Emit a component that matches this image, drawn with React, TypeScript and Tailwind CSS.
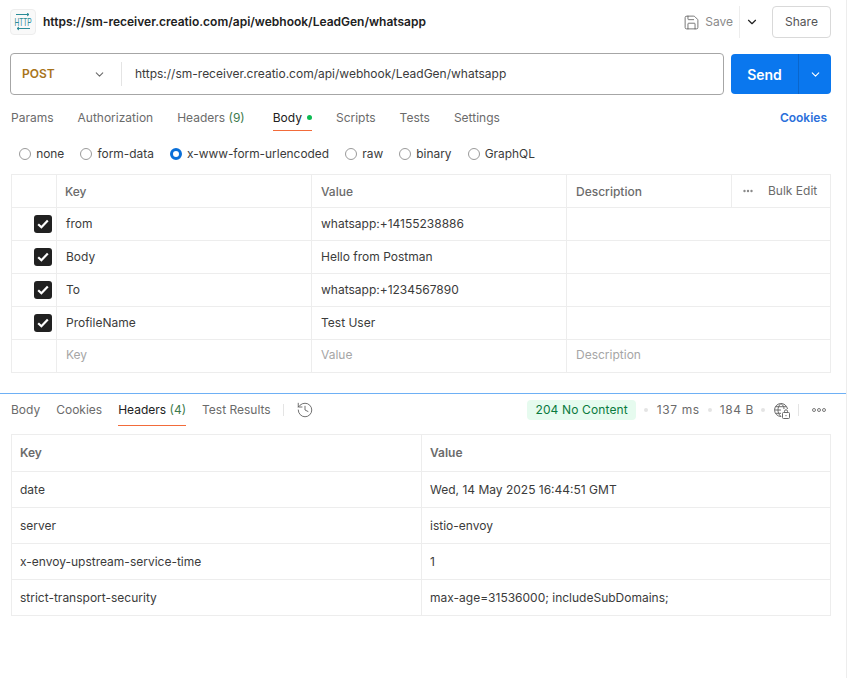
import { ChevronDown, History, Save } from 'lucide-react'

const font = { fontFamily: 'Inter, "Liberation Sans", sans-serif' }

const requestTabs = ['Params', 'Authorization']
const bodyTypes = ['none', 'form-data', 'x-www-form-urlencoded', 'raw', 'binary', 'GraphQL']
const params = [
  ['from', 'whatsapp:+14155238886'],
  ['Body', 'Hello from Postman'],
  ['To', 'whatsapp:+1234567890'],
  ['ProfileName', 'Test User'],
]
const responseHeaders = [
  ['date', 'Wed, 14 May 2025 16:44:51 GMT'],
  ['server', 'istio-envoy'],
  ['x-envoy-upstream-service-time', '1'],
  ['strict-transport-security', 'max-age=31536000; includeSubDomains;'],
]

/** 三个小圆点 */
function Dots() {
  return (
    <svg width="14" height="4" viewBox="0 0 14 4" fill="none" stroke="#6b6b6b" strokeWidth="0.9">
      <circle cx="2" cy="2" r="1.5" />
      <circle cx="7" cy="2" r="1.5" />
      <circle cx="12" cy="2" r="1.5" />
    </svg>
  )
}

function SmallDots() {
  return (
    <svg width="10" height="4" viewBox="0 0 10 4" fill="#8a8a8a">
      <circle cx="1.500" cy="2" r="1.200" />
      <circle cx="5" cy="2" r="1.200" />
      <circle cx="8.500" cy="2" r="1.200" />
    </svg>
  )
}

function HttpIcon() {
  return (
    <div className="flex h-[26px] w-[26px] items-center justify-center rounded-[4px] border border-[#ededed] bg-[#f9f9f9]">
      <svg width="18" height="18" viewBox="0 0 18 18" fill="none" stroke="#2a8c97" strokeWidth="1">
        <path d="M2 1.500h13M13 0l2 1.500-2 1.500" />
        <path d="M16 15.500H3M5 14l-2 1.500 2 1.500" />
        <text
          transform="translate(0.500 13) scale(0.6 1)"
          fontSize="11"
          fill="#2a8c97"
          stroke="none"
          fontFamily="Liberation Sans, sans-serif"
        >
          HTTP
        </text>
      </svg>
    </div>
  )
}

function GlobeLock() {
  return (
    <svg width="17" height="17" viewBox="0 0 17 17" fill="none" stroke="#6b6b6b" strokeWidth="1">
      <path d="M8 14.500A6.500 6.500 0 1 1 14.500 7" />
      <path d="M8 1.500C5.500 3.500 5 6 5 8s.5 4.500 3 6.500M8 1.500C10 3 11 5 11 7M1.500 8H8M2.500 4.700h11M2.500 11.300H8" />
      <rect x="9.500" y="10.500" width="7" height="6" rx="1" fill="#fff" />
      <path d="M11.500 10.500V9.300a1.500 1.500 0 0 1 3 0v1.200" />
      <path d="M13 13v1.200" />
    </svg>
  )
}

function Radio({ label, checked }: { label: string; checked?: boolean }) {
  return (
    <label className="flex items-center gap-[5.2px]">
      {checked ? (
        <span className="h-3 w-3 rounded-full border-[3.5px] border-[#0a6fd8] bg-white" />
      ) : (
        <span className="h-3 w-3 rounded-full border border-[#9a9a9a] bg-white" />
      )}
      <span className="text-[11.9px] leading-[16px] text-[#3b3b3b]">{label}</span>
    </label>
  )
}

function Checkbox() {
  return (
    <span className="flex h-[18px] w-[18px] items-center justify-center rounded-[3px] bg-[#212121]">
      <svg width="12" height="10" viewBox="0 0 12 10" fill="none" stroke="#fff" strokeWidth="2.200">
        <path d="M1.200 5.200 4.400 8.300 10.800 1.500" />
      </svg>
    </span>
  )
}

function Row({ k, v, last, muted }: { k: string; v: string; last?: boolean; muted?: boolean }) {
  const color = muted ? 'text-[#a6a6a6] pb-[2px]' : 'text-[#3b3b3b]'
  return (
    <div
      className={`grid grid-cols-[45px_255px_255px_1fr] text-[12px] ${
        last ? 'h-[32px]' : 'h-[33px] border-b border-[#ededed]'
      }`}
    >
      <div className="flex items-center justify-center border-r border-[#ededed] pl-[20px] pr-[3px]">
        {!muted && <Checkbox />}
      </div>
      <div className={`flex items-center border-r border-[#ededed] pl-[9px] ${color}`}>{k}</div>
      <div className={`flex items-center border-r border-[#ededed] pl-[9px] ${color}`}>{v}</div>
      <div className={`flex items-center pl-[9px] ${color}`}>{muted ? 'Description' : ''}</div>
    </div>
  )
}

export default function App() {
  return (
    <div className="h-[678px] w-[861px] overflow-hidden bg-white" style={font}>
      <div className="h-full w-[847px] border-r border-[#ededed]">
        {/* 顶部标题栏 */}
        <div className="flex h-[44px] items-center pl-[10px] pr-[15px]">
          <HttpIcon />
          <span className="ml-[7px] text-[12px] font-semibold text-[#212121]">
            https://sm-receiver.creatio.com/api/webhook/LeadGen/whatsapp
          </span>
          <div className="ml-auto flex items-center">
            <Save size={17} strokeWidth={1.1} className="text-[#545454]" />
            <span className="ml-[5px] text-[12px] text-[#8a8a8a]">Save</span>
            <span className="ml-[6px] h-8 w-px bg-[#ededed]" />
            <ChevronDown size={14} className="ml-[5px] text-[#212121]" />
            <button className="ml-[13px] h-8 w-[59px] rounded-[4px] border border-[#d9d9d9] text-[12px] text-[#545454]">
              Share
            </button>
          </div>
        </div>

        {/* 请求地址栏 */}
        <div className="mt-[9px] flex h-[42px] gap-[7px] pl-[10px] pr-[15px]">
          <div className="flex h-[42px] w-[714px] items-center rounded-[4px] border border-[#a6a6a6]">
            <span className="ml-[11px] w-[71px] text-[12px] font-semibold text-[#a8741a]">POST</span>
            <ChevronDown size={13} className="text-[#6b6b6b]" />
            <span className="ml-[15px] h-6 w-px bg-[#e4e4e4]" />
            <span className="ml-[13px] text-[12px] text-[#3b3b3b]">
              https://sm-receiver.creatio.com/api/webhook/LeadGen/whatsapp
            </span>
          </div>
          <div className="mt-px flex h-10 w-[100px] rounded-[4px] bg-[#0a77ee] text-white">
            <span className="flex w-[68px] items-center justify-center border-r border-[#0a66cc] text-[14px] font-semibold">
              Send
            </span>
            <span className="flex flex-1 items-center justify-center">
              <ChevronDown size={13} />
            </span>
          </div>
        </div>

        {/* 请求标签 */}
        <div className="mt-[9px] flex h-[27px] items-center pl-[11px] pr-[19px] text-[12px] text-[#6b6b6b]">
          <div className="flex gap-6">
            {requestTabs.map((tab) => (
              <span key={tab}>{tab}</span>
            ))}
            <span>
              Headers <span className="text-[#3d7a4d]">(9)</span>
            </span>
          </div>
          <span className="relative ml-[28px] flex h-[27px] items-center text-[#212121]">
            Body
            <span className="ml-[5px] h-[5px] w-[5px] rounded-full bg-[#0cbb52]" />
            <span className="absolute bottom-0 left-0 right-0 h-px bg-[#f26b3a]" />
          </span>
          <div className="ml-6 flex gap-6">
            <span>Scripts</span>
            <span>Tests</span>
            <span>Settings</span>
          </div>
          <span className="ml-auto font-semibold text-[#2a6fdb]">Cookies</span>
        </div>

        {/* Body 类型 */}
        <div className="mt-[13px] flex h-5 items-center gap-4 pl-[19px]">
          {bodyTypes.map((t) => (
            <Radio key={t} label={t} checked={t === 'x-www-form-urlencoded'} />
          ))}
        </div>

        {/* 参数表 */}
        <div className="ml-[11px] mt-[10px] w-[820px] border border-[#ededed]">
          <div className="grid h-[33px] grid-cols-[45px_255px_255px_165px_1fr] border-b border-[#ededed] text-[12px] font-medium text-[#6b6b6b]">
            <div className="border-r border-[#ededed]" />
            <div className="flex items-center border-r border-[#ededed] pl-[8px] pt-[2px]">Key</div>
            <div className="flex items-center border-r border-[#ededed] pl-[9px] pt-[2px]">Value</div>
            <div className="flex items-center border-r border-[#ededed] pl-[9px] pt-[2px]">Description</div>
            <div className="flex items-center pl-[11px] font-normal">
              <SmallDots />
              <span className="ml-[15px]">Bulk Edit</span>
            </div>
          </div>
          {params.map(([k, v]) => (
            <Row key={k} k={k} v={v} />
          ))}
          <Row k="Key" v="Value" muted last />
        </div>

        {/* 响应区 */}
        <div className="mt-5 border-t border-[#6eb0f5]">
          <div className="flex h-[32px] items-center pl-[11px] pr-[20px] text-[12px] text-[#6b6b6b]">
            <span>Body</span>
            <span className="ml-4">Cookies</span>
            <span className="relative ml-4 flex h-[32px] items-center text-[#212121]">
              Headers&nbsp;<span className="text-[#3d7a4d]">(4)</span>
              <span className="absolute bottom-0 left-0 right-0 h-px bg-[#f26b3a]" />
            </span>
            <span className="ml-4">Test Results</span>
            <span className="ml-3 h-3 w-px bg-[#e4e4e4]" />
            <History size={18} strokeWidth={1.1} className="ml-3 text-[#545454]" />
            <div className="ml-auto flex items-center">
              <span className="flex h-5 items-center rounded-[4px] bg-[#e6fbef] px-2 tracking-[0.13px] text-[#0a7a3e]">
                204 No Content
              </span>
              <span className="ml-2 h-1 w-1 rounded-full bg-[#e4e4e4]" />
              <span className="ml-[9px] tracking-[0.6px]">137 ms</span>
              <span className="ml-2 h-1 w-1 rounded-full bg-[#e4e4e4]" />
              <span className="ml-2 tracking-[0.6px]">184 B</span>
              <span className="ml-[7px] h-1 w-1 rounded-full bg-[#e4e4e4]" />
              <span className="ml-2">
                <GlobeLock />
              </span>
              <span className="ml-[8px] h-3 w-px bg-[#e4e4e4]" />
              <span className="ml-[13px]">
                <Dots />
              </span>
            </div>
          </div>

          <div className="ml-[11px] mt-2 w-[820px] border border-[#ededed] text-[12px] text-[#3b3b3b]">
            <div className="grid h-[37px] grid-cols-[410px_1fr] border-b border-[#ededed] font-semibold text-[#6b6b6b]">
              <div className="flex items-center border-r border-[#ededed] pl-2">Key</div>
              <div className="flex items-center pl-2">Value</div>
            </div>
            {responseHeaders.map(([k, v], i) => (
              <div
                key={k}
                className={`grid grid-cols-[410px_1fr] ${i < 3 ? 'h-9 border-b border-[#ededed]' : 'h-[35px]'}`}
              >
                <div className="flex items-center border-r border-[#ededed] pl-2">{k}</div>
                <div className="flex items-center pl-2">{v}</div>
              </div>
            ))}
          </div>
        </div>
      </div>
    </div>
  )
}
